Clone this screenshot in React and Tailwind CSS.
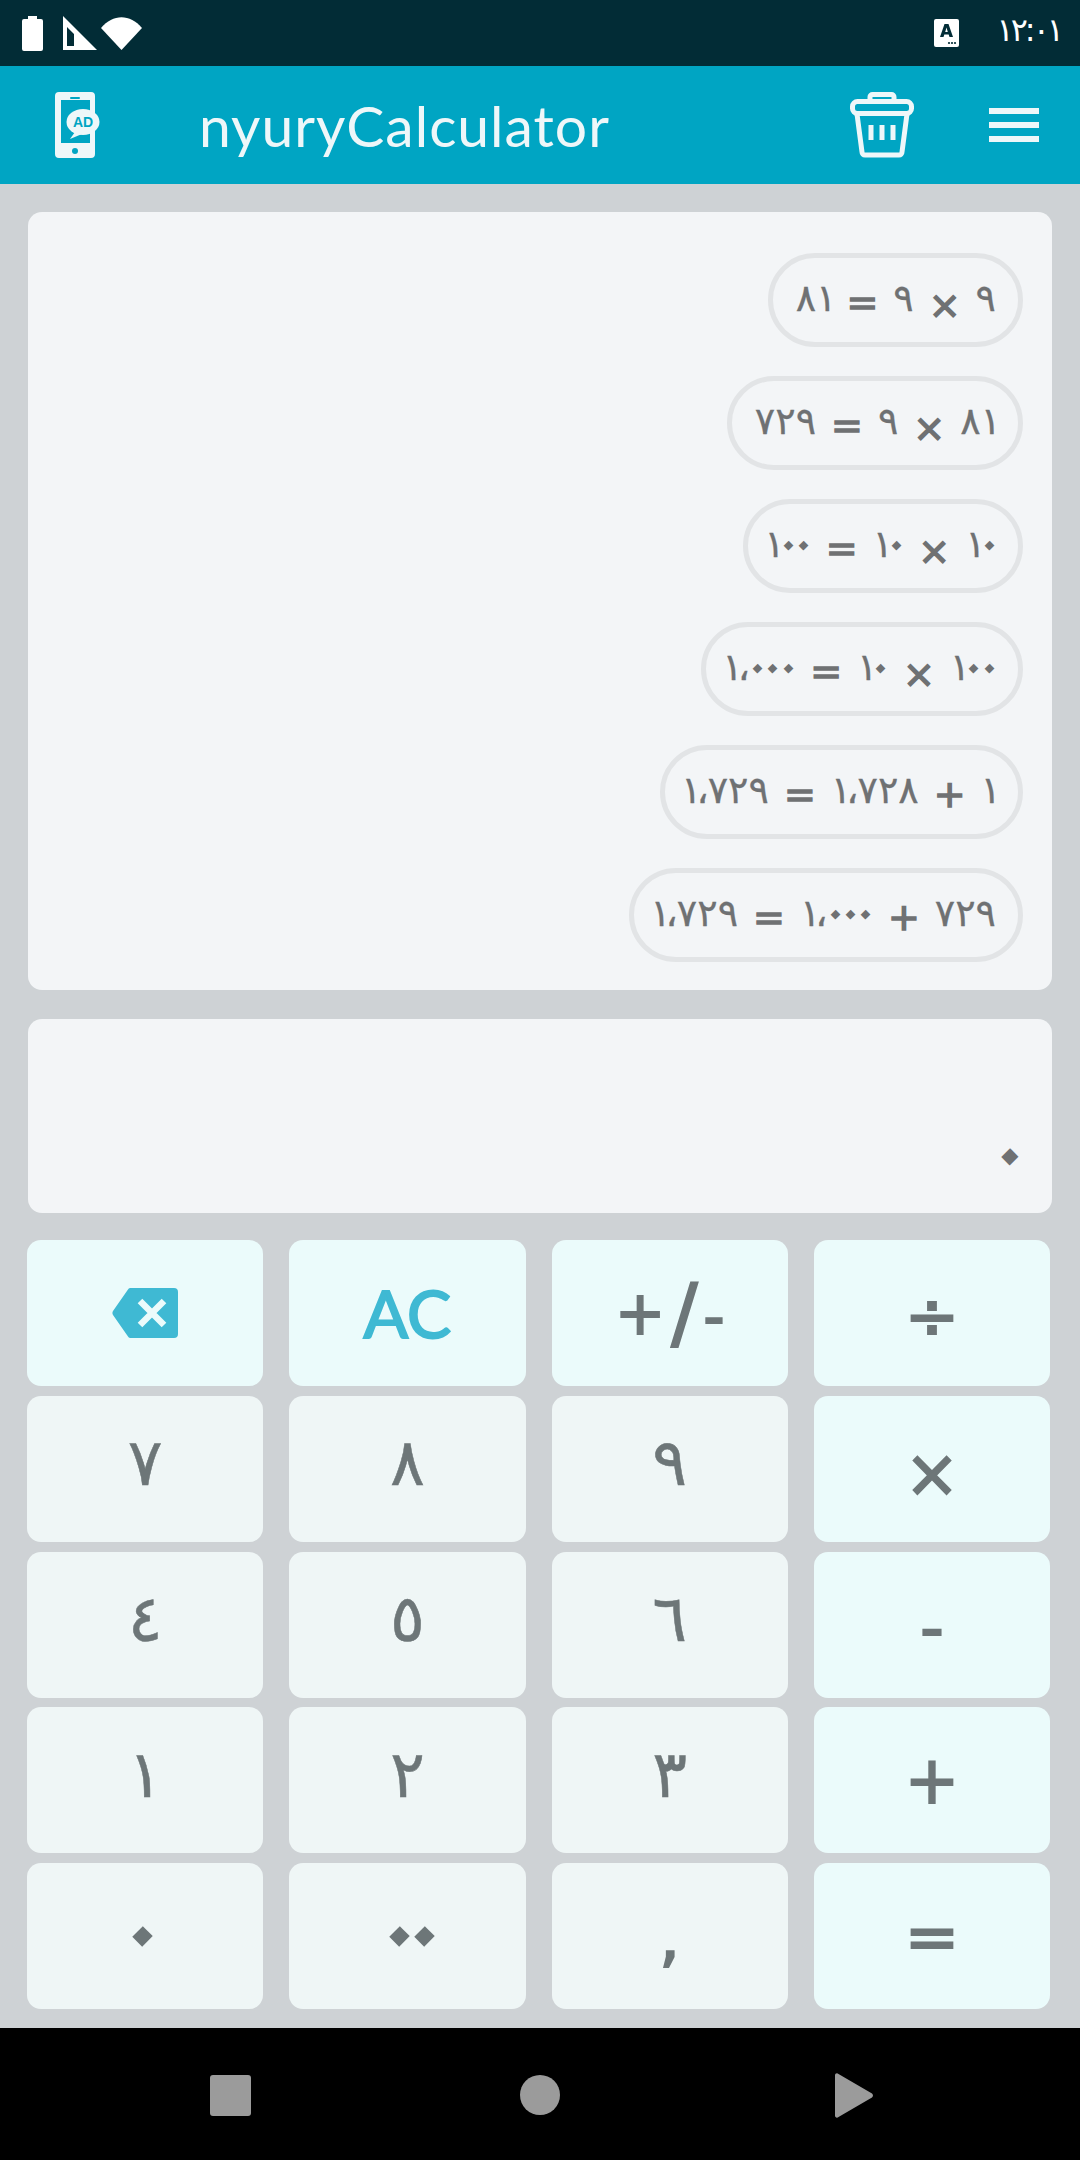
const digitFont = "font-['DejaVu_Sans',sans-serif]"
const latinFont = "font-['Lato',sans-serif]"

const history = [
  ['٨١', '=', '٩', '×', '٩'],
  ['٧٢٩', '=', '٩', '×', '٨١'],
  ['١٠٠', '=', '١٠', '×', '١٠'],
  ['١،٠٠٠', '=', '١٠', '×', '١٠٠'],
  ['١،٧٢٩', '=', '١،٧٢٨', '+', '١'],
  ['١،٧٢٩', '=', '١،٠٠٠', '+', '٧٢٩'],
]

const up = 'pb-[12px]'
const keys = [
  { id: 'back', op: true },
  { id: 'ac', op: true },
  { id: 'sign', op: true },
  { label: '÷', op: true, shift: 'pt-[6px]' },
  { label: '٧', shift: up }, { label: '٨', shift: up }, { label: '٩', shift: up },
  { label: '×', op: true, shift: 'pt-[10px]' },
  { label: '٤', shift: up }, { label: '٥', shift: up }, { label: '٦', shift: up },
  { label: '-', op: true, shift: 'pt-[6px]' },
  { label: '١', shift: up }, { label: '٢', shift: up }, { label: '٣', shift: up },
  { label: '+', op: true },
  { label: '٠', shift: 'pb-[6px]' }, { label: '٠٠', shift: 'pl-[16px] pb-[6px]' }, { label: ',' },
  { label: '=', op: true },
]

// zero and one are much narrower in the original font, and letter-spacing
// does nothing on arabic text, so the digits are flex items with margins
function Num({ text, big, first }) {
  const chars = [...text]
  return (
    <span className="inline-flex items-baseline">
      {chars.map((ch, i) => {
        let cls = ''
        if (big) {
          if (ch === '٠') cls = '[-webkit-text-stroke:7px_currentColor] rotate-45'
          if (ch === '٠' && i < chars.length - 1) cls += ' -mr-[10px]'
        } else if (ch === '٠') {
          cls = '[-webkit-text-stroke:2.5px_currentColor] rotate-45 -mr-[5px]'
        } else if (ch === '١') {
          cls = first && i === 0 ? '-ml-[7px] -mr-[5px]' : '-mr-[5px]'
        } else if (ch === '،') {
          cls = '-mr-[1px]'
        }
        return <span key={i} className={cls}>{ch}</span>
      })}
    </span>
  )
}

function StatusBar() {
  return (
    <div className="h-[66px] bg-[#022c36] flex items-center justify-between pl-[22px] pr-[16px]">
      <div className="flex items-center gap-[4px]">
        <svg width="21" height="35" viewBox="0 0 21 35" className="mr-[16px]">
          <path d="M6 0h9v3h4a2 2 0 0 1 2 2v28a2 2 0 0 1-2 2H2a2 2 0 0 1-2-2V5a2 2 0 0 1 2-2h4z" fill="#fff" />
        </svg>
        <svg width="34" height="34" viewBox="0 0 34 34">
          <path fillRule="evenodd" d="M0 0L34 34H0zM4 11V30H11V18z" fill="#fff" />
        </svg>
        <svg width="41" height="33" viewBox="0 0 41 33">
          <path d="M0 11C12 -3.500 29 -3.500 41 11L20.500 33z" fill="#fff" />
        </svg>
      </div>
      <div className="flex items-center gap-[37px]">
        <svg width="25" height="28" viewBox="0 0 25 28">
          <rect width="25" height="28" rx="2" fill="#fff" />
          <path d="M6 18L10.500 5h4L19 18h-3.500l-.8-2.500h-4.400L9.500 18zM11.200 13h2.600L12.500 8.500z" fill="#022c36" />
          <circle cx="15" cy="24" r="1.100" fill="#022c36" />
          <circle cx="18" cy="24" r="1.100" fill="#022c36" />
          <circle cx="21" cy="24" r="1.100" fill="#022c36" />
        </svg>
        <span className={`${digitFont} text-[32px] leading-none text-white flex pb-[6px]`}>
          <span className="-mr-[3px]">١</span>
          <span className="-mr-[3px]">٢</span>
          <span className="-mr-[3px]">:</span>
          <span className="-mr-[3px]">٠</span>
          <span>١</span>
        </span>
      </div>
    </div>
  )
}

function AppBar() {
  return (
    <header className="h-[118px] bg-[#00a5c3] flex items-center pl-[55px] pr-[41px] text-[#eef7f9]">
      <svg width="40" height="66" viewBox="0 0 40 66" className="overflow-visible">
        <path fillRule="evenodd" d="M4 0h32a4 4 0 0 1 4 4v58a4 4 0 0 1-4 4H4a4 4 0 0 1-4-4V4a4 4 0 0 1 4-4zM6 8V51H35V8z" fill="#eef7f9" />
        <rect x="15" y="5" width="10" height="2" rx="1" fill="#00a5c3" />
        <circle cx="20" cy="59" r="3" fill="#00a5c3" />
        <ellipse cx="28" cy="30" rx="16.500" ry="13" fill="#eef7f9" />
        <path d="M20 40L15 47L27 42z" fill="#eef7f9" />
        <text x="28" y="35" textAnchor="middle" fontSize="14" fontWeight="700" fill="#00a5c3" fontFamily="'Liberation Sans', sans-serif">AD</text>
      </svg>
      <span className={`${latinFont} ml-[104px] text-[57px] tracking-[1px] leading-none`}>nyuryCalculator</span>
      <svg width="64" height="66" viewBox="0 0 64 66" className="ml-auto mr-[75px]" fill="none" stroke="#eef7f9" strokeWidth="5" strokeLinejoin="round" strokeLinecap="round">
        <path d="M20 9V5a2.500 2.500 0 0 1 2.500-2.500h19A2.500 2.500 0 0 1 44 5v4" />
        <rect x="2.500" y="9.500" width="59" height="12" rx="5" />
        <path d="M7 22L12 60a3 3 0 0 0 3 3H49a3 3 0 0 0 3-3L57 22" />
        <path d="M21 33V48M32 33V48M43 33V48" strokeLinecap="butt" />
      </svg>
      <div className="w-[50px] flex flex-col gap-[8px]">
        <div className="h-[6px] bg-[#eef7f9]" />
        <div className="h-[6px] bg-[#eef7f9]" />
        <div className="h-[6px] bg-[#eef7f9]" />
      </div>
    </header>
  )
}

function HistoryPill({ parts }) {
  return (
    <div className={`${digitFont} h-[94px] border-[5px] border-[#e2e4e6] rounded-full flex items-center gap-[15px] pl-[23px] pr-[22px] text-[38px] leading-none text-[#6f7173]`}>
      {parts.map((part, i) => {
        if (part === '×') return <span key={i} className="mt-[9px] [-webkit-text-stroke:1.5px_currentColor]">{part}</span>
        if (part === '=' || part === '+') return <span key={i} className="mt-[3px] [-webkit-text-stroke:1.5px_currentColor]">{part}</span>
        return <span key={i} className="mb-[4px] [-webkit-text-stroke:0.3px_currentColor]"><Num text={part} first={i === 0} /></span>
      })}
    </div>
  )
}

function Key({ item }) {
  const bg = item.op ? 'bg-[#ebfbfb]' : 'bg-[#eff6f6]'
  const base = `${bg} h-[146px] rounded-[14px] flex items-center justify-center leading-none`
  if (item.id === 'back') {
    return (
      <button className={base}>
        <svg width="66" height="50" viewBox="0 0 66 50">
          <path d="M16 1.500A3 3 0 0 1 18 0H62a4 4 0 0 1 4 4V46a4 4 0 0 1-4 4H18a3 3 0 0 1-2-1.500L1 27a4 4 0 0 1 0-4z" fill="#3fb9d3" />
          <path d="M28 13L52 37M52 13L28 37" stroke="#ebfbfb" strokeWidth="6.500" />
        </svg>
      </button>
    )
  }
  if (item.id === 'ac') {
    return (
      <button className={`${base} ${latinFont} text-[#3fb9d3] text-[66px] [-webkit-text-stroke:2px_currentColor]`}>AC</button>
    )
  }
  if (item.id === 'sign') {
    return (
      <button className={`${base} ${digitFont} text-[#6d7678] [-webkit-text-stroke:2px_currentColor] gap-[6px]`}>
        <span className="text-[60px]">+</span>
        <span className="text-[78px]">/</span>
        <span className="text-[58px] pt-[8px]">-</span>
      </button>
    )
  }
  const isOp = item.op || item.label === ','
  return (
    <button className={`${base} ${digitFont} text-[#6d7678] text-[65px] ${item.shift || ''} ${isOp ? '[-webkit-text-stroke:2px_currentColor]' : '[-webkit-text-stroke:0.5px_currentColor]'}`}>
      <Num text={item.label} big />
    </button>
  )
}

function NavBar() {
  return (
    <div className="flex-1 bg-black flex items-center pl-[210px] pt-[2px]">
      <div className="w-[41px] h-[41px] rounded-[3px] bg-[#9b9b9b]" />
      <div className="w-[40px] h-[40px] rounded-full bg-[#9b9b9b] ml-[269px]" />
      <svg width="38" height="45" viewBox="0 0 38 45" className="ml-[275px]">
        <path d="M0 2.500C0 .5 2 -.5 3.500 1L37 20.500C38.300 21.500 38.300 23.500 37 24.500L3.500 44C2 45.500 0 44.500 0 42.500z" fill="#9b9b9b" />
      </svg>
    </div>
  )
}

export default function App() {
  return (
    <div className="w-[1080px] h-[2160px] flex flex-col overflow-hidden">
      <StatusBar />
      <AppBar />
      <main className="h-[1844px] bg-[#ced2d5] pt-[28px] px-[27px]">
        <section className="ml-px w-[1024px] h-[778px] rounded-[14px] bg-[#f3f5f7] flex flex-col items-end gap-[29px] pt-[41px] pr-[29px]">
          {history.map((parts, i) => (
            <HistoryPill key={i} parts={parts} />
          ))}
        </section>
        <section className={`${digitFont} ml-px mt-[29px] w-[1024px] h-[194px] rounded-[14px] bg-[#f3f5f7] flex items-end justify-end pr-[28px] pb-[36px] text-[44px] leading-none text-[#6f7173]`}>
          <span className="rotate-45 [-webkit-text-stroke:7px_currentColor]">٠</span>
        </section>
        <div className="mt-[27px] w-[1023px] grid grid-cols-4 gap-x-[26px] gap-y-[9.75px]">
          {keys.map((item, i) => (
            <Key key={i} item={item} />
          ))}
        </div>
      </main>
      <NavBar />
    </div>
  )
}
